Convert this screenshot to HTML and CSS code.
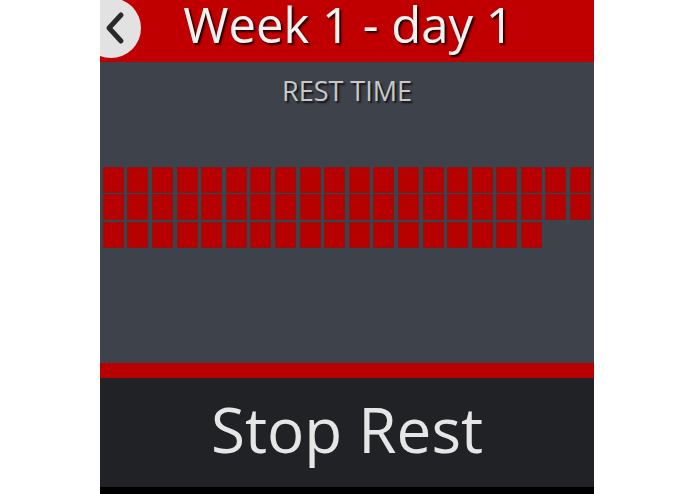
FILE: index.html
```html
<!DOCTYPE html>
<html lang="en">
<head>
    <meta charset="UTF-8">
    <title>Week 1 - day 1</title>
    <link rel="stylesheet" href="styles.css">
</head>
<body>
    <div class="watch">
        <div class="header">
            <div class="back">
                <svg width="22" height="34" viewBox="0 0 22 34">
                    <path d="M17 4 L5 17 L17 30" fill="none" stroke="#2a2a2a" stroke-width="5" stroke-linecap="round" stroke-linejoin="round"/>
                </svg>
            </div>
            <h1>Week 1 - day 1</h1>
        </div>
        <div class="rest">
            <p class="label">REST TIME</p>
            <div class="blocks" id="blocks"></div>
        </div>
        <div class="divider"></div>
        <div class="stop">Stop Rest</div>
        <div class="bottom"></div>
    </div>

    <script>
        const blocks = document.getElementById('blocks');
        const remaining = 58;

        for (let i = 0; i < remaining; i++) {
            const cell = document.createElement('div');
            cell.className = 'cell';
            blocks.appendChild(cell);
        }
    </script>
</body>
</html>
```

FILE: styles.css
```css
body {
    margin: 0;
    padding: 0;
    background: #fff;
    font-family: "Open Sans", "Noto Sans", sans-serif;
}
.watch {
    width: 494px;
    height: 494px;
    margin-left: 100px;
    display: flex;
    flex-direction: column;
    overflow: hidden;
}
.header {
    height: 62px;
    background-color: #c00000;
    position: relative;
    display: flex;
    justify-content: center;
    align-items: flex-start;
}
.header h1 {
    margin: 0;
    padding-left: 3px;
    color: #f2f2f2;
    font-size: 49px;
    font-weight: normal;
    line-height: 49px;
    text-shadow: 2px 2px 2px rgba(0, 0, 0, 0.8);
}
.back {
    position: absolute;
    left: -19px;
    top: -2px;
    width: 60px;
    height: 60px;
    border-radius: 50%;
    background-color: #e2e2e2;
    display: flex;
    align-items: center;
    justify-content: flex-end;
    padding-right: 15px;
    box-sizing: border-box;
}
.rest {
    flex-grow: 1;
    background-color: #3e424b;
    display: flex;
    flex-direction: column;
    align-items: center;
}
.label {
    margin: 14px 0 0;
    color: #c8c8c8;
    font-size: 27px;
    line-height: 30px;
    text-shadow: 2px 2px 2px rgba(0, 0, 0, 0.7);
}
.blocks {
    margin-top: 60px;
    width: 100%;
    display: flex;
    flex-wrap: wrap;
    padding: 0 1px;
    box-sizing: border-box;
}
.cell {
    width: 21px;
    height: 26px;
    margin: 0.8px 1.8px;
    background-color: #b70000;
    border: 1px solid #8e1414;
    box-sizing: border-box;
}
.divider {
    height: 15px;
    background-color: #b80000;
}
.stop {
    height: 109px;
    padding-bottom: 8px;
    box-sizing: border-box;
    background-color: #202226;
    color: #e6e6e6;
    font-size: 62px;
    display: flex;
    justify-content: center;
    align-items: center;
}
.bottom {
    height: 7px;
    background-color: #000;
}
```
